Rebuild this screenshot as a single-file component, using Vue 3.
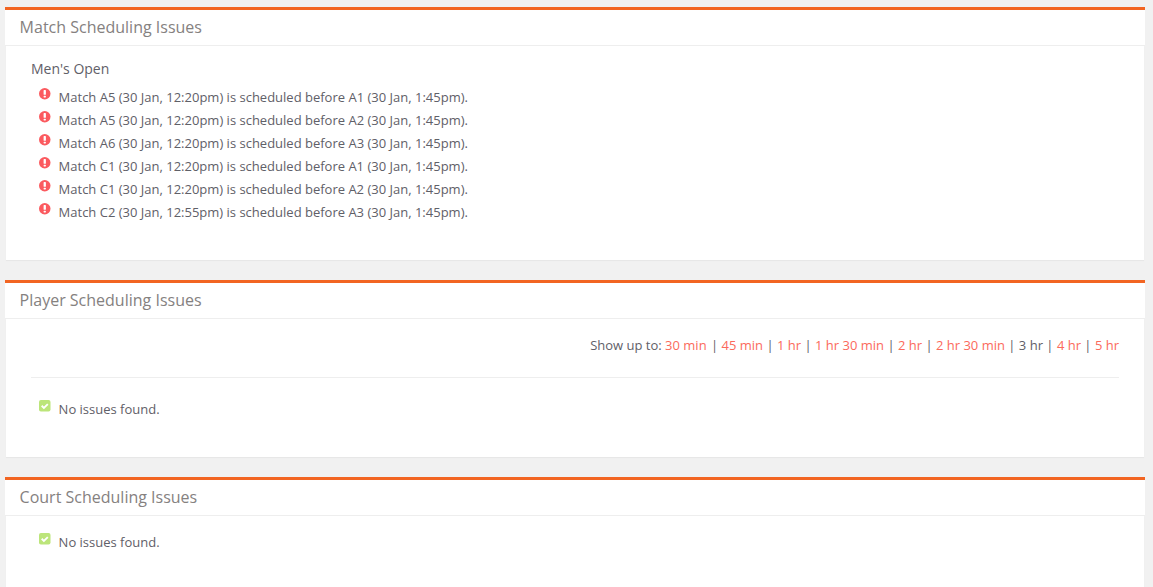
<template>
  <div class="page">
    <section class="panel">
      <h2 class="panel-title">Match Scheduling Issues</h2>
      <div class="panel-body match-body">
        <h4 class="group-name">Men's Open</h4>
        <ul class="issues">
          <li v-for="(issue, i) in matchIssues" :key="i" class="issue">
            <svg class="icon" viewBox="0 0 12 12">
              <circle cx="6" cy="6" r="6" fill="#fb5a5f" />
              <rect x="4.8" y="2.2" width="2.4" height="4.8" rx="0.6" fill="#fff" />
              <rect x="4.8" y="8" width="2.4" height="2" rx="0.5" fill="#fff" />
            </svg>
            <span>{{ issue }}</span>
          </li>
        </ul>
      </div>
    </section>

    <section class="panel">
      <h2 class="panel-title">Player Scheduling Issues</h2>
      <div class="panel-body player-body">
        <div class="show-up">
          Show up to:
          <template v-for="(opt, i) in durations" :key="opt">
            <span v-if="i" class="sep"> | </span>
            <a :class="{ current: opt === '3 hr' }">{{ opt }}</a>
          </template>
        </div>
        <hr class="rule" />
        <div class="issue">
          <svg class="icon" viewBox="0 0 12 12">
            <rect width="12" height="12" rx="2" fill="#bce57a" />
            <path d="M2.8 6l2.3 2.3L9.2 4.2" fill="none" stroke="#fff" stroke-width="1.9" />
          </svg>
          <span>No issues found.</span>
        </div>
      </div>
    </section>

    <section class="panel">
      <h2 class="panel-title">Court Scheduling Issues</h2>
      <div class="panel-body court-body">
        <div class="issue">
          <svg class="icon" viewBox="0 0 12 12">
            <rect width="12" height="12" rx="2" fill="#bce57a" />
            <path d="M2.8 6l2.3 2.3L9.2 4.2" fill="none" stroke="#fff" stroke-width="1.9" />
          </svg>
          <span>No issues found.</span>
        </div>
      </div>
    </section>
  </div>
</template>

<script setup>
const matchIssues = [
  "Match A5 (30 Jan, 12:20pm) is scheduled before A1 (30 Jan, 1:45pm).",
  "Match A5 (30 Jan, 12:20pm) is scheduled before A2 (30 Jan, 1:45pm).",
  "Match A6 (30 Jan, 12:20pm) is scheduled before A3 (30 Jan, 1:45pm).",
  "Match C1 (30 Jan, 12:20pm) is scheduled before A1 (30 Jan, 1:45pm).",
  "Match C1 (30 Jan, 12:20pm) is scheduled before A2 (30 Jan, 1:45pm).",
  "Match C2 (30 Jan, 12:55pm) is scheduled before A3 (30 Jan, 1:45pm).",
];
const durations = ["30 min", "45 min", "1 hr", "1 hr 30 min", "2 hr", "2 hr 30 min", "3 hr", "4 hr", "5 hr"];
</script>

<style>
html, body {
  background: #f1f1f1;
  overflow: hidden;
}
</style>

<style scoped>
.page {
  height: 587px;
  overflow: hidden;
  padding: 7px 8px 0 5px;
  box-sizing: border-box;
  font-family: "Open Sans", "Liberation Sans", sans-serif;
  font-size: 13px;
  color: #5f6068;
  display: flex;
  flex-direction: column;
  gap: 20px;
}
.panel {
  flex: none;
  border-top: 3px solid #f26522;
}
.panel-title {
  margin: 0;
  padding: 0 15px 0 14.6px;
  height: 35px;
  line-height: 34px;
  font-size: 16px;
  font-weight: 400;
  color: #85817f;
  background: #fff;
  border-bottom: 1px solid #eee;
}
.panel-body {
  margin: 0 1px;
  padding: 0 25px;
  background: #fff;
  box-shadow: 0 1px 1px rgba(0, 0, 0, 0.04);
}
.match-body {
  height: 214px;
  padding-top: 14px;
  box-sizing: border-box;
}
.player-body {
  height: 138px;
  padding-top: 17px;
  box-sizing: border-box;
}
.court-body {
  height: 80px;
  padding-top: 17px;
  box-sizing: border-box;
}
.group-name {
  margin: 0 0 10px;
  font-size: 14px;
  line-height: 18px;
  font-weight: 400;
  color: #5f6068;
}
.issues {
  list-style: none;
  margin: 0;
  padding: 0;
}
.issue {
  display: flex;
  align-items: flex-start;
  height: 23px;
  line-height: 18px;
  padding-left: 8px;
}
.icon {
  width: 11.5px;
  height: 11.5px;
  margin: 0 8.1px 0 0;
  flex: none;
}
.show-up {
  text-align: right;
  line-height: 18px;
}
.show-up a {
  color: #fb6a5c;
}
.show-up a.current {
  color: #5f6068;
}
.sep {
  color: #5f6068;
}
.sep:first-of-type {
  margin-left: 1px;
}
.rule {
  border: 0;
  border-top: 1px solid #eee;
  margin: 23px 0 22px;
}
</style>
